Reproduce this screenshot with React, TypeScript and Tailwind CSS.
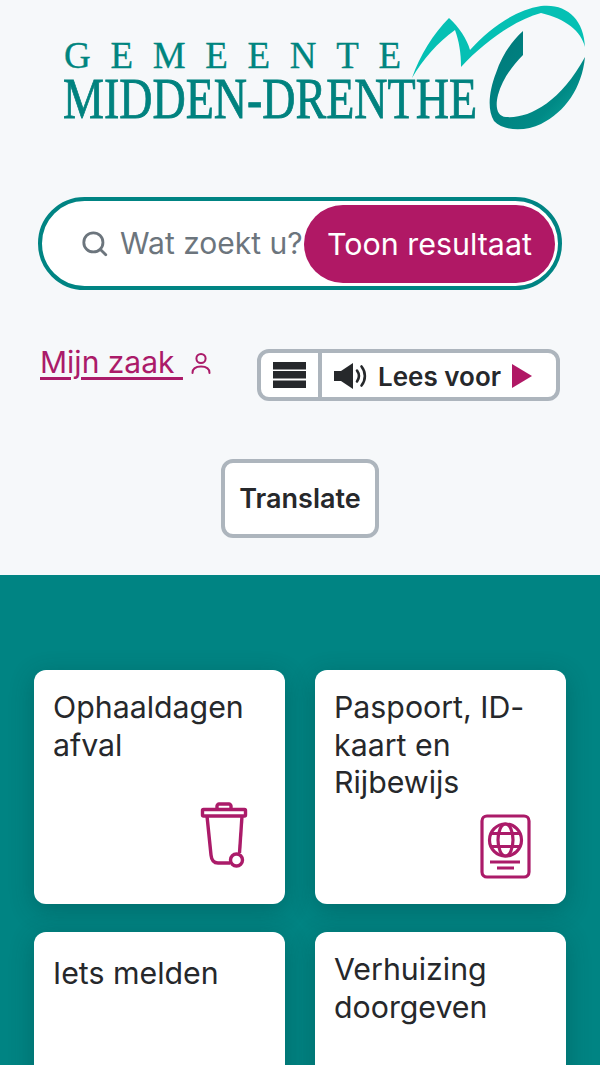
import React from 'react'

const Logo = () => (
  <svg className="block" width="600" height="135" viewBox="0 0 600 135" xmlns="http://www.w3.org/2000/svg">
    <defs>
      <linearGradient id="dark" x1="0" y1="0" x2="1" y2="1">
        <stop offset="0" stopColor="#00787a" />
        <stop offset="0.7" stopColor="#008a86" />
        <stop offset="1" stopColor="#12b0a4" />
      </linearGradient>
    </defs>
    <text x="64" y="68" fontFamily="'Liberation Serif', serif" fontSize="37" fill="#00857f" stroke="#00857f" strokeWidth="0.3" textLength="337" lengthAdjust="spacing">GEMEENTE</text>
    <text x="63" y="118" fontFamily="'Liberation Serif', serif" fontSize="57" fill="#00827f" stroke="#00827f" strokeWidth="0.8" textLength="414" lengthAdjust="spacingAndGlyphs">MIDDEN-DRENTHE</text>
    <path
      d="M412 78 C420 55 433 34 449 18 C459 27 467 39 470 50 C490 28 515 10 541 6 C566 3 584 19 585 47 C581 31 566 19 541 13 C515 20 484 42 461 67 C461 53 459 41 455 30 C438 42 423 59 412 78 Z"
      fill="#05c0b4"
    />
    <path
      d="M523 31 L523 55 C512 66 502 80 498 95 C495 107 497 116 506 117 C528 119 560 103 585 57 C582 88 565 112 541 124 C525 132 503 131 494 121 C487 110 489 91 496 73 C502 55 512 41 523 31 Z"
      fill="url(#dark)"
    />
  </svg>
)

const Tile = ({ title, icon, pad = 'pt-[19px]' }: { title: string; icon?: React.ReactNode; pad?: string }) => (
  <div className={`relative h-[234px] rounded-xl bg-white px-[19px] text-[30.3px] leading-[37.5px] text-[#26282b] shadow-[0_6px_24px_rgba(0,50,50,0.3)] ${pad}`}>
    {title}
    {icon}
  </div>
)

export default function App() {
  return (
    <div className="h-[1065px] overflow-hidden bg-[#f6f8fa] font-['Inter',sans-serif]">
      <Logo />

      <div className="ml-[38px] mt-[62px] flex h-[93px] w-[524px] items-center rounded-full border-4 border-[#008483] bg-white pl-[39px] pr-[3px]">
        <svg className="shrink-0" width="27" height="27" viewBox="0 0 24 24" fill="none" stroke="#6c757d" strokeWidth="2.5" strokeLinecap="round">
          <circle cx="11" cy="11" r="8.5" />
          <path d="M17.5 17.5 22 22" />
        </svg>
        <span className="ml-[12px] whitespace-nowrap text-[30px] text-[#6c757d]">Wat zoekt u?</span>
        <button className="ml-auto flex h-[78px] w-[251px] shrink-0 items-center justify-center rounded-full bg-[#b01865] pt-[2px] text-[30.4px] text-white">
          Toon resultaat
        </button>
      </div>

      <div className="mt-[59px] flex items-start pl-[40px] pr-[40px]">
        <a className="mt-[-5px] text-[30px] leading-[37.5px] text-[#ab1b69] underline underline-offset-[4px] whitespace-pre">Mijn zaak </a>
        <svg className="ml-[7px] mt-[2px]" width="22" height="24" viewBox="0 0 22 24" fill="none" stroke="#ab1b69" strokeWidth="2" strokeLinecap="round">
          <circle cx="11" cy="7.5" r="4.6" />
          <path d="M2.5 22 C2.5 17 6 15.5 11 15.5 C16 15.5 19.5 17 19.5 22" />
        </svg>
        <div className="ml-auto flex h-[52px] w-[303px] items-stretch rounded-xl border-4 border-[#adb5bd] bg-white">
          <div className="flex w-[61px] items-center justify-center border-r-4 border-[#adb5bd]">
            <svg width="33" height="26" viewBox="0 0 33 26" fill="#26282b">
              <rect width="33" height="7.5" />
              <rect y="9" width="33" height="7.5" />
              <rect y="18.5" width="33" height="7.5" />
            </svg>
          </div>
          <div className="flex flex-1 items-center pl-[11px] pt-[2px]">
            <svg width="35" height="28" viewBox="0 0 35 28" fill="none">
              <path d="M1 9 H8 L20 1 V27 L8 19 H1 Z" fill="#26282b" />
              <path d="M24 8.5 C26.5 12 26.5 16 24 19.5" stroke="#26282b" strokeWidth="2.6" strokeLinecap="round" />
              <path d="M28.5 4.5 C33 10 33 18 28.5 23.5" stroke="#26282b" strokeWidth="2.6" strokeLinecap="round" />
            </svg>
            <span className="ml-[10px] text-[26px] font-semibold text-[#26282b]">Lees voor</span>
            <svg className="ml-[11px]" width="20" height="24" viewBox="0 0 20 24" fill="#b01865">
              <path d="M0 0 L20 12 L0 24 Z" />
            </svg>
          </div>
        </div>
      </div>

      <div className="mt-[58px] flex justify-center">
        <button className="h-[79px] w-[158px] rounded-xl border-4 border-[#adb5bd] bg-white pt-[2px] text-[27px] font-semibold text-[#26282b]">
          Translate
        </button>
      </div>

      <div className="mt-[37px] h-[490px] bg-[#008483] px-[34px] pt-[95px]">
        <div className="grid grid-cols-2 gap-x-[30px] gap-y-[28px]">
          <Tile
            title="Ophaaldagen afval"
            icon={
              <svg className="absolute left-[165px] top-[132px]" width="50" height="66" viewBox="0 0 50 66" fill="none" stroke="#ab1b69" strokeWidth="3.4" strokeLinejoin="round">
                <rect x="3.5" y="7.5" width="43" height="6.5" rx="1" />
                <path d="M18 7 V4 C18 3 19 2 20 2 H30 C31 2 32 3 32 4 V7" />
                <path d="M8 14 L12 53 C12.5 58 15 61 19 61 H31" />
                <path d="M43 14 L40.5 51" />
                <circle cx="37.5" cy="58" r="6" />
              </svg>
            }
          />
          <Tile
            title="Paspoort, ID-kaart en Rijbewijs"
            icon={
              <svg className="absolute left-[165px] top-[144px]" width="52" height="66" viewBox="0 0 52 66" fill="none" stroke="#ab1b69" strokeWidth="3.2">
                <rect x="2" y="2" width="47" height="61" rx="5" />
                <circle cx="25.5" cy="26" r="16" />
                <ellipse cx="25.5" cy="26" rx="7.5" ry="16" />
                <path d="M11 19.5 H40 M11 32.5 H40" />
                <path d="M10 48 H40 M17 54 H34" />
              </svg>
            }
          />
          <Tile title="Iets melden" pad="pt-[23px]" />
          <Tile title="Verhuizing doorgeven" />
        </div>
      </div>
    </div>
  )
}
